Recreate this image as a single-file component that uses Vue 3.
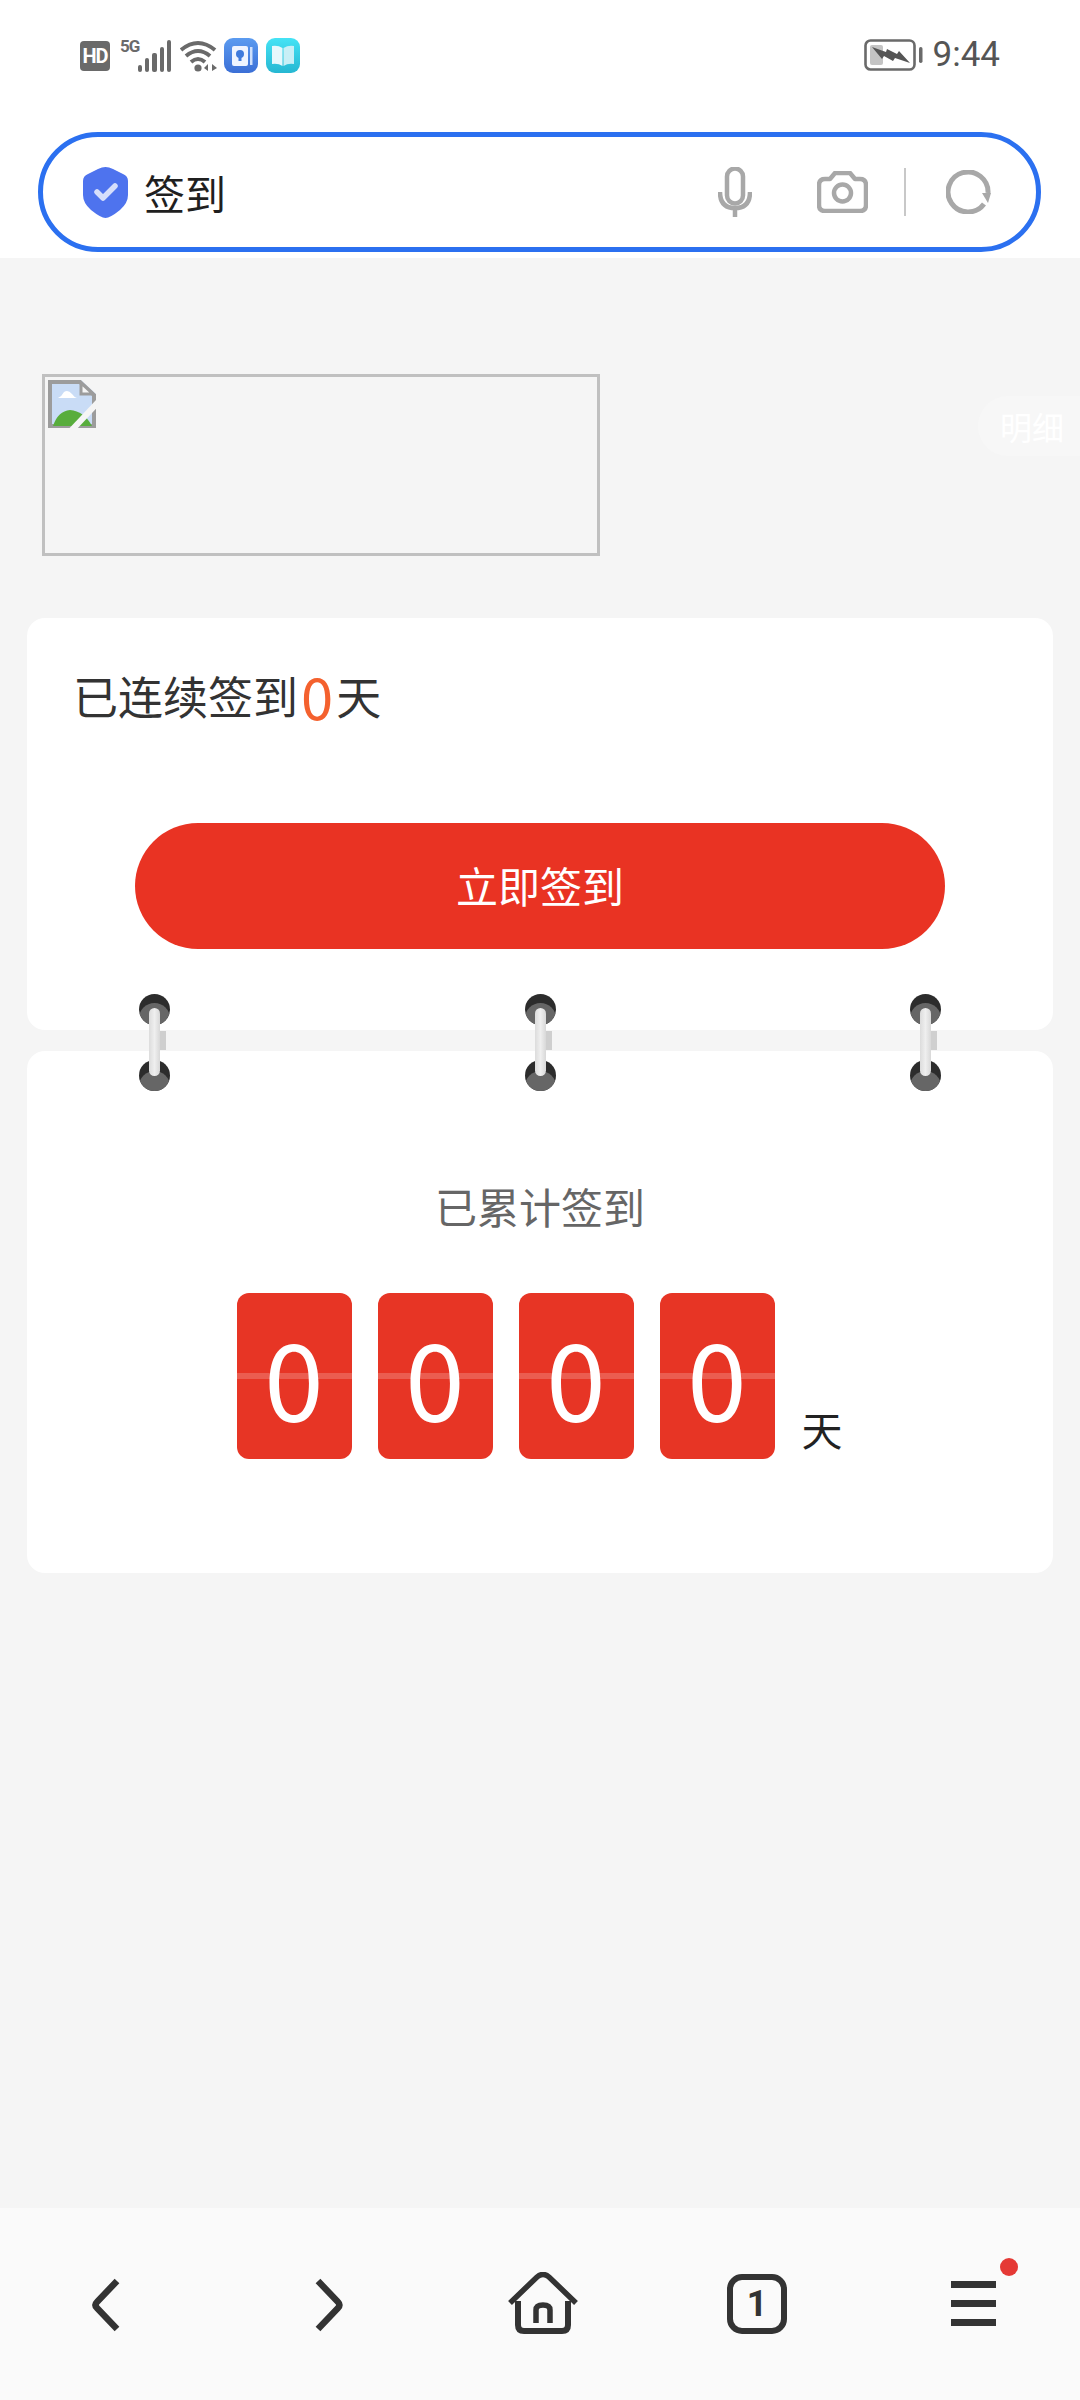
<script setup>
const digits = [0, 0, 0, 0]
const rings = [1, 2, 3]
</script>

<template>
  <div class="page">
    <header class="top">
      <div class="status">
        <div class="status-left">
          <span class="hd">HD</span>
          <div class="net">
            <span class="five">5G</span>
            <svg class="signal" width="33" height="32" viewBox="0 0 33 32">
              <g fill="#6a6a6a">
                <rect x="0" y="25" width="4" height="7" rx="2" />
                <rect x="7" y="18" width="4" height="14" rx="2" />
                <rect x="14" y="13" width="5" height="19" rx="2" />
                <rect x="22" y="7" width="4" height="25" rx="2" />
                <rect x="29" y="0" width="4" height="32" rx="2" />
              </g>
            </svg>
          </div>
          <svg class="wifi" width="38" height="32" viewBox="0 0 38 32">
            <g fill="none" stroke="#6a6a6a" stroke-width="4">
              <path d="M1 10 Q18 -4 35 10" />
              <path d="M6 16 Q18 6 30 16" />
              <path d="M11 22 Q18 16 25 22" />
            </g>
            <circle cx="18" cy="28" r="3.6" fill="#6a6a6a" />
            <path d="M28 24 V31 L24 28 Z M32 24 V31 L37 28 Z" fill="#6a6a6a" />
          </svg>
          <svg class="app" width="34" height="35" viewBox="0 0 34 35">
            <defs>
              <linearGradient id="appBlue" x1="0" y1="0" x2="0" y2="1">
                <stop offset="0" stop-color="#5b9bf0" />
                <stop offset="1" stop-color="#3b6fd6" />
              </linearGradient>
            </defs>
            <rect width="34" height="35" rx="9" fill="url(#appBlue)" />
            <rect x="8" y="8" width="16" height="20" rx="2" fill="#eef4ff" />
            <rect x="26" y="9" width="2.5" height="18" fill="#cfe0fb" />
            <circle cx="16" cy="16" r="4" fill="#3f7bdc" />
            <rect x="14.5" y="19" width="3" height="4" fill="#3f7bdc" />
          </svg>
          <svg class="app book" width="34" height="35" viewBox="0 0 34 35">
            <defs>
              <linearGradient id="appTeal" x1="0" y1="0" x2="0" y2="1">
                <stop offset="0" stop-color="#45e3f5" />
                <stop offset="1" stop-color="#26b7d2" />
              </linearGradient>
            </defs>
            <rect width="34" height="35" rx="9" fill="url(#appTeal)" />
            <path d="M6 8 Q12 7 16.500 10 V28 Q12 25 6 26 Z" fill="#e6f8fc" />
            <path d="M28 8 Q22 7 17.500 10 V28 Q22 25 28 26 Z" fill="#c8eff6" />
          </svg>
        </div>
        <div class="status-right">
          <svg width="59" height="32" viewBox="0 0 59 32">
            <rect x="1.500" y="1.500" width="49" height="29" rx="5" fill="none" stroke="#6a6a6a" stroke-width="2.600" />
            <rect x="6" y="6" width="13" height="20" rx="2" fill="#c4c4c4" />
            <rect x="55" y="8" width="3.500" height="16" rx="1.700" fill="#6a6a6a" />
            <path d="M8 8 L22 13 L23 10 L33 15 L35 12 L46 24 L31 19 L29 22 L20 17 L18 20 Z" fill="#555" />
          </svg>
          <span class="time">9:44</span>
        </div>
      </div>
      <div class="search">
        <svg class="shield" width="45" height="51" viewBox="0 0 45 51">
          <path d="M22.500 0 Q26 0 30 2 L40 7 Q45 9 45 14 V28 Q45 36 37 43 Q27 51 22.500 51 Q18 51 8 43 Q0 36 0 28 V14 Q0 9 5 7 L15 2 Q19 0 22.500 0 Z" fill="#4e73ee" />
          <path d="M14 25 L20 31 L32 19" fill="none" stroke="#d6defb" stroke-width="5.500" stroke-linecap="round" stroke-linejoin="round" />
        </svg>
        <span class="query">签到</span>
        <svg class="mic" width="34" height="50" viewBox="0 0 34 50">
          <g fill="none" stroke="#a8a8a8">
            <rect x="9" y="1.500" width="16" height="35" rx="8" stroke-width="4.500" />
            <path d="M2 25 Q2 41 17 41 Q32 41 32 25" stroke-width="4.500" />
            <path d="M17 41 V50" stroke-width="4.500" />
          </g>
        </svg>
        <svg class="camera" width="51" height="42" viewBox="0 0 51 42">
          <g fill="none" stroke="#a8a8a8" stroke-width="4.500">
            <path d="M8 8 H13 L18 2 H33 L38 8 H43 Q49 8 49 14 V34 Q49 40 43 40 H8 Q2 40 2 34 V14 Q2 8 8 8 Z" stroke-linejoin="round" />
            <circle cx="25.500" cy="22" r="8.500" />
          </g>
        </svg>
        <span class="divider"></span>
        <svg class="reload" width="45" height="44" viewBox="0 0 45 44">
          <path d="M38 34 A20 20 0 1 1 42 23" fill="none" stroke="#a8a8a8" stroke-width="5" />
          <path d="M36 23 H45 L42 33 Z" fill="#a8a8a8" />
        </svg>
      </div>
    </header>

    <main class="main">
      <span class="pill">明细</span>
      <div class="broken">
        <svg width="48" height="48" viewBox="0 0 48 48">
          <path d="M0 0 H33 L48 14 V48 H0 Z" fill="#c9dcf6" />
          <path d="M2 2 H32 L46 15 V46 H2 Z" fill="none" stroke="#9c9c9c" stroke-width="4" />
          <path d="M33 3 V14 H45 Z" fill="#f5f5f5" stroke="#9c9c9c" stroke-width="3" />
          <path d="M10 18 Q14 16 16 12 Q20 9 24 14 Q26 17 29 18 Z" fill="#fff" />
          <path d="M5 46 Q10 31 22 30 Q36 31 44 46 Z" fill="#58ad3c" />
          <path d="M22 52 L52 20" stroke="#f5f5f5" stroke-width="6" />
        </svg>
      </div>

      <div class="cards">
        <section class="card streak">
          <p class="streak-line">已连续签到<span class="count">0</span>天</p>
          <button class="sign">立即签到</button>
        </section>
        <section class="card total">
          <p class="total-title">已累计签到</p>
          <div class="flip-row">
            <div v-for="(d, i) in digits" :key="i" class="flip">{{ d }}</div>
            <span class="unit">天</span>
          </div>
        </section>
        <div class="rings">
          <div v-for="r in rings" :key="r" class="ring">
            <span class="hole"></span>
            <span class="hole low"></span>
            <span class="bar"></span>
            <span class="bar-shadow"></span>
          </div>
        </div>
      </div>
    </main>

    <nav class="nav">
      <svg class="nav-back" width="30" height="56" viewBox="0 0 30 56">
        <path d="M26 4 L6 25 Q3 28 6 31 L26 52" fill="none" stroke="#333" stroke-width="6.500" />
      </svg>
      <svg class="nav-fwd" width="30" height="56" viewBox="0 0 30 56">
        <path d="M4 4 L24 25 Q27 28 24 31 L4 52" fill="none" stroke="#333" stroke-width="6.500" />
      </svg>
      <svg class="nav-home" width="70" height="62" viewBox="0 0 70 62">
        <g fill="none" stroke="#333">
          <path d="M2 31 L29 5 Q35 0 41 5 L68 31" stroke-width="5.500" />
          <path d="M10 29 V53 Q10 59 16 59 H54 Q60 59 60 53 V29" stroke-width="6" />
          <path d="M28 51 V38 Q28 33 35 33 Q42 33 42 38 V51" stroke-width="5.500" />
        </g>
      </svg>
      <span class="nav-tab">1</span>
      <div class="nav-menu">
        <span class="line"></span>
        <span class="line"></span>
        <span class="line"></span>
        <span class="dot"></span>
      </div>
    </nav>
  </div>
</template>

<style scoped>
.page {
  width: 1080px;
  height: 2400px;
  display: flex;
  flex-direction: column;
  background: #f5f5f5;
  font-family: "Noto Sans CJK SC", "Noto Sans", sans-serif;
  overflow: hidden;
}

.top {
  height: 258px;
  background: #fff;
  flex: none;
}

.status {
  height: 132px;
  padding: 38px 80px 0 80px;
  box-sizing: border-box;
  display: flex;
  justify-content: space-between;
  align-items: flex-start;
}

.status-left {
  display: flex;
  align-items: flex-start;
}

.hd {
  width: 30px;
  height: 30px;
  margin-top: 3px;
  border-radius: 4px;
  background: #6a6a6a;
  color: #fff;
  font: 700 20px/30px "Roboto", sans-serif;
  letter-spacing: -1px;
  text-align: center;
}

.net {
  position: relative;
  margin-left: 28px;
  margin-top: 2px;
  width: 33px;
}

.five {
  position: absolute;
  left: -18px;
  top: -3px;
  color: #6a6a6a;
  font: 700 17px/18px "Roboto", sans-serif;
  letter-spacing: -1px;
}

.signal {
  display: block;
}

.wifi {
  margin-left: 9px;
  margin-top: 2px;
}

.app {
  margin-left: 6px;
}

.book {
  margin-left: 8px;
}

.status-right {
  display: flex;
  align-items: center;
  gap: 10px;
}

.time {
  color: #555;
  font: 400 35px/34px "Roboto", sans-serif;
}

.search {
  width: 1003px;
  height: 120px;
  margin-left: 38px;
  box-sizing: border-box;
  border: 5px solid #2b70f0;
  border-radius: 60px;
  background: #fff;
  display: flex;
  align-items: center;
}

.shield {
  margin-left: 40px;
  flex: none;
}

.query {
  margin-left: 16px;
  font-size: 41px;
  line-height: 50px;
  color: #1f1f1f;
}

.mic {
  margin-left: 492px;
}

.camera {
  margin-left: 65px;
}

.divider {
  width: 2px;
  height: 48px;
  margin-left: 36px;
  background: #c8c8c8;
}

.reload {
  margin-left: 40px;
}

.main {
  flex: 1;
  position: relative;
  padding-top: 116px;
}

.pill {
  position: absolute;
  right: 0;
  top: 138px;
  width: 102px;
  height: 60px;
  box-sizing: border-box;
  padding-left: 22px;
  border-radius: 30px 0 0 30px;
  background: #f7f7f7;
  color: #fff;
  font-size: 32px;
  line-height: 60px;
}

.broken {
  margin-left: 42px;
  padding: 3px 0 0 3px;
  box-sizing: border-box;
  width: 558px;
  height: 182px;
  border: 3px solid #c0c0c0;
}

.broken svg {
  display: block;
}

.cards {
  position: relative;
  margin: 62px 27px 0;
  display: flex;
  flex-direction: column;
  gap: 21px;
}

.card {
  background: #fff;
  border-radius: 18px;
}

.streak {
  height: 412px;
  box-sizing: border-box;
  padding-top: 37px;
}

.streak-line {
  margin: 0 0 0 46px;
  height: 80px;
  display: flex;
  align-items: center;
  color: #333;
  font-size: 45px;
}

.count {
  color: #f4612e;
  font: 400 58px/80px "Noto Sans CJK SC", sans-serif;
  margin: 0 3px;
}

.sign {
  display: block;
  width: 810px;
  height: 126px;
  margin: 88px auto 0;
  padding: 0 0 3px;
  border: 0;
  border-radius: 63px;
  background: #e93323;
  color: #fff;
  font-family: inherit;
  font-size: 42px;
}

.total {
  height: 522px;
  box-sizing: border-box;
  padding-top: 125px;
}

.total-title {
  margin: 0 0 57px;
  text-align: center;
  color: #666;
  font-size: 42px;
  line-height: 60px;
}

.flip-row {
  display: flex;
  justify-content: center;
  gap: 26px;
  padding-right: 1px;
}

.flip {
  position: relative;
  width: 115px;
  height: 166px;
  border-radius: 12px;
  background: #e73525;
  color: #fff;
  font: 400 107px/165px "Noto Sans CJK SC", sans-serif;
  text-align: center;
  overflow: hidden;
}

.flip::after {
  content: "";
  position: absolute;
  left: 0;
  right: 0;
  top: 80px;
  height: 6px;
  background: rgba(255, 255, 255, 0.2);
}

.unit {
  align-self: flex-end;
  margin-bottom: 6px;
  margin-left: 1px;
  color: #222;
  font-size: 41px;
  line-height: 50px;
}

.rings {
  position: absolute;
  left: 112px;
  right: 112px;
  top: 376px;
  display: flex;
  justify-content: space-between;
}

.ring {
  position: relative;
  width: 31px;
  height: 96px;
}

.hole {
  position: absolute;
  left: 0;
  top: 0;
  width: 31px;
  height: 31px;
  border-radius: 50%;
  background: #2c2c2c;
  overflow: hidden;
}

.hole::after {
  content: "";
  position: absolute;
  left: 0;
  top: 9px;
  width: 31px;
  height: 31px;
  border-radius: 50%;
  background: #666;
}

.hole.low {
  top: 66px;
}

.hole.low::after {
  top: 11px;
}

.bar {
  position: absolute;
  left: 10px;
  top: 14px;
  width: 11px;
  height: 68px;
  border-radius: 6px;
  background: linear-gradient(90deg, #dcdcdc, #efefef 50%, #d8d8d8);
}

.bar-shadow {
  position: absolute;
  left: 21px;
  top: 37px;
  width: 6px;
  height: 19px;
  background: #cfcfcf;
}

.nav {
  position: relative;
  height: 192px;
  flex: none;
  background: #fafafa;
}

.nav > svg,
.nav-tab,
.nav-menu {
  position: absolute;
}

.nav-back {
  left: 91px;
  top: 69px;
}

.nav-fwd {
  left: 314px;
  top: 69px;
}

.nav-home {
  left: 508px;
  top: 64px;
}

.nav-tab {
  left: 727px;
  top: 66px;
  width: 60px;
  height: 60px;
  box-sizing: border-box;
  border: 6px solid #333;
  border-radius: 15px;
  color: #333;
  font: 700 36px/48px "Roboto", sans-serif;
  text-align: center;
}

.nav-menu {
  left: 951px;
  top: 73px;
  width: 45px;
  display: flex;
  flex-direction: column;
  gap: 12px;
}

.line {
  height: 7px;
  background: #333;
}

.dot {
  position: absolute;
  left: 49px;
  top: -23px;
  width: 18px;
  height: 18px;
  border-radius: 50%;
  background: #e53935;
}
</style>
